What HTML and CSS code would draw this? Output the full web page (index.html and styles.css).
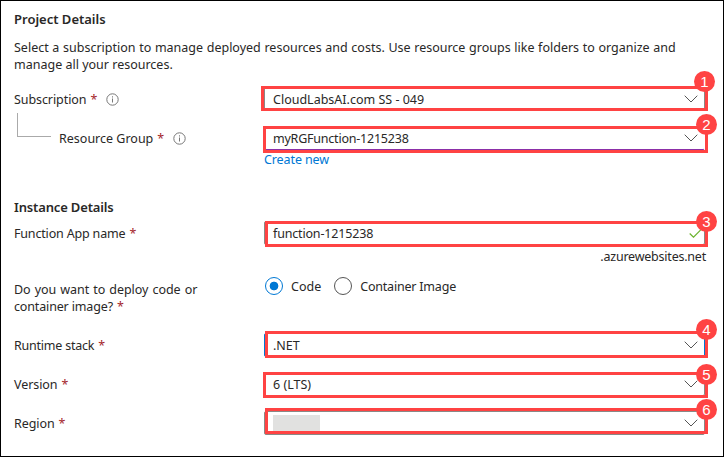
FILE: index.html
```html
<!DOCTYPE html>
<html lang="en">
<head>
<meta charset="utf-8">
<title>Create Function App</title>
<link rel="stylesheet" href="styles.css">
</head>
<body>
<svg class="defs" width="0" height="0" aria-hidden="true">
  <symbol id="chevron" viewBox="0 0 14 8"><path d="M.7.7 7 7 13.300.7"/></symbol>
  <symbol id="info" viewBox="0 0 13 13"><circle cx="6.500" cy="6.500" r="5.700"/><path d="M6.500 5.500V9.500M6.500 3.300V4.500"/></symbol>
</svg>
<main class="page">
  <h2 class="heading">Project Details</h2>
  <p class="intro"><span class="intro-first">Select a subscription to manage deployed resources and costs. Use resource groups like folders to organize and</span><br>manage all your resources.</p>

  <div class="row subscription">
    <div class="label"><span>Subscription</span><b class="req">*</b><svg class="info"><use href="#info"/></svg></div>
    <div class="field"><span class="t-sub">CloudLabsAI.com SS - 049</span><svg class="chevron"><use href="#chevron"/></svg>
      <div class="mark m1"><i class="badge">1</i></div></div>
  </div>
  <div class="row group">
    <div class="label nested"><span>Resource Group</span><b class="req">*</b><svg class="info"><use href="#info"/></svg></div>
    <div class="field visited"><span class="t-rg">myRGFunction-1215238</span><svg class="chevron"><use href="#chevron"/></svg>
      <div class="mark m2"><i class="badge">2</i></div></div>
  </div>
  <a class="create">Create new</a>

  <h2 class="heading instance">Instance Details</h2>
  <div class="row name">
    <div class="label"><span>Function App name</span><b class="req">*</b></div>
    <div class="field"><span class="t-fn">function-1215238</span><svg class="check" viewBox="0 0 13 9"><path d="M.7 4.500 4.500 8.200 12 .7"/></svg>
      <div class="mark m3"><i class="badge">3</i></div></div>
  </div>
  <div class="suffix"><span>.azurewebsites.net</span></div>

  <div class="row deploy">
    <div class="question"><span class="question-first">Do you want to deploy code or</span><br><span>container image?</span><b class="req">*</b></div>
    <div class="choices">
      <span class="radio on"></span><span class="choice">Code</span>
      <span class="radio"></span><span class="choice t-container">Container Image</span>
    </div>
  </div>

  <div class="row runtime">
    <div class="label"><span>Runtime stack</span><b class="req">*</b></div>
    <div class="field focused"><span>.NET</span><svg class="chevron"><use href="#chevron"/></svg>
      <div class="mark m4"><i class="badge">4</i></div></div>
  </div>
  <div class="row version">
    <div class="label"><span>Version</span><b class="req">*</b></div>
    <div class="field"><span>6 (LTS)</span><svg class="chevron"><use href="#chevron"/></svg>
      <div class="mark m5"><i class="badge">5</i></div></div>
  </div>
  <div class="row region">
    <div class="label"><span>Region</span><b class="req">*</b></div>
    <div class="field"><span class="masked"></span><svg class="chevron"><use href="#chevron"/></svg>
      <div class="mark m6"><i class="badge">6</i></div></div>
  </div>
</main>
</body>
</html>
```
FILE: styles.css
```css
* { box-sizing: border-box; }
body { margin: 0; background: #fff; color: #292827; font: 12.5px/17px "Noto Sans", sans-serif; }
.defs { position: absolute; }
.page { width: 724px; height: 457px; border: 1px solid #000; padding: 10px 17px 0 13px; white-space: nowrap; }
.heading { margin: 0; font-size: 13px; font-weight: 600; line-height: 17px; }
.intro { margin: 11px 0 0; }
.intro-first { word-spacing: .4px; }
.row { display: grid; grid-template-columns: 250px 441px; }
.label { display: flex; align-items: center; height: 24px; letter-spacing: -.08px; }
.req { color: #a4262c; font-weight: 400; margin-left: 4px; }
.info { width: 13px; height: 13px; margin-left: 9px; fill: none; stroke: #777; stroke-width: 1; }
.field { position: relative; display: flex; align-items: center; justify-content: space-between; height: 24px; border: 1px solid #8a8886; border-radius: 2px; padding: 0 6px 0 8px; }
.visited { border-color: #fff #fff #8b2fa8; }
.focused { border-color: #0078d4; }
.chevron { width: 14px; height: 8px; fill: none; stroke: #555; stroke-width: 1; }
.check { width: 13px; height: 9px; margin-right: -4px; fill: none; stroke: #6bb32e; stroke-width: 1.2; }
.t-rg { letter-spacing: -.22px; }
.t-fn { letter-spacing: -.17px; }

.subscription { margin-top: 14px; }
.group { margin-top: 15px; }
.nested { padding-left: 45px; position: relative; letter-spacing: 0; }
.nested::before { content: ""; position: absolute; left: 3px; top: -13px; width: 33px; height: 23px; border: solid #aaa; border-width: 0 0 1px 1px; }
.create { display: block; width: 80px; margin: 1px 0 0 250px; color: #0078d4; letter-spacing: -.1px; }
.instance { margin-top: 31px; letter-spacing: -.15px; }
.name { margin-top: 5px; }
.name .label { letter-spacing: -.17px; }
.suffix { display: flex; justify-content: flex-end; width: 692px; margin-top: 3px; letter-spacing: -.22px; }
.deploy { margin-top: 16px; }
.question-first { word-spacing: .8px; }
.question { letter-spacing: -.03px; }
.question span:not(.question-first) { letter-spacing: -.15px; }
.choices { display: flex; align-items: center; height: 18px; margin: -4px 0 0 1px; }
.radio { width: 18px; height: 18px; border: 1px solid #555; border-radius: 50%; margin-right: 8px; }
.on { border-color: #0078d4; background: radial-gradient(circle, #0078d4 4px, #fff 4.700px); }
.choice { margin-right: 13px; }
.t-container { letter-spacing: -.2px; }
.runtime { margin-top: 18px; }
.runtime .label { letter-spacing: -.22px; }
.runtime .req, .name .req { letter-spacing: 0; }
.version, .region { margin-top: 15px; }
.masked { width: 47px; height: 17px; background: #e1e1e0; }

.mark { position: absolute; border: 3px solid #ff4343; }
.badge { position: absolute; display: flex; align-items: center; justify-content: center; width: 21px; height: 21px; border-radius: 50%; background: #ff4343; color: #fff; font: 15px/21px "Liberation Sans", sans-serif; }
.m1 { left: -4px; top: -2px; width: 447px; height: 25px; }
.m2 { left: -2px; top: -1px; width: 445px; height: 27px; }
.m3 { left: 0; top: -1px; width: 443px; height: 26px; }
.m4 { left: 0; top: -3px; width: 443px; height: 27px; }
.m5 { left: -2px; top: -1px; width: 445px; height: 26px; }
.m6 { left: 0; top: -4px; width: 443px; height: 26px; }
.m1 .badge { right: -10px; top: -18px; }
.m2 .badge { right: -12px; top: -15px; }
.m3 .badge { right: -12px; top: -13px; }
.m4 .badge { right: -12px; top: -15px; }
.m5 .badge { right: -12px; top: -11px; }
.m6 .badge { right: -12px; top: -12px; }
```
